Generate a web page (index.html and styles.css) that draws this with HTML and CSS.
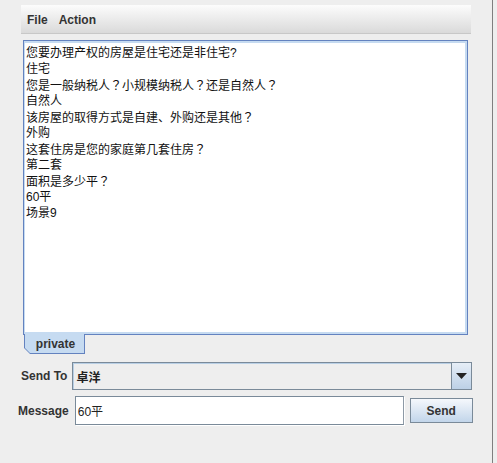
FILE: index.html
```html
<!DOCTYPE html>
<html>
<head>
<meta charset="utf-8">
<link rel="stylesheet" href="styles.css">
</head>
<body>
<div class="frame">
  <div class="menubar">
    <span class="menu">File</span>
    <span class="menu">Action</span>
  </div>
  <div class="tabpane">
    <div class="content">
      <div class="textarea">
        <div class="line">您要办理产权的房屋是住宅还是非住宅?</div>
        <div class="line">住宅</div>
        <div class="line">您是一般纳税人<span class="fw">？</span>小规模纳税人<span class="fw">？</span>还是自然人<span class="fw">？</span></div>
        <div class="line">自然人</div>
        <div class="line">该房屋的取得方式是自建、外购还是其他<span class="fw">？</span></div>
        <div class="line">外购</div>
        <div class="line">这套住房是您的家庭第几套住房<span class="fw">？</span></div>
        <div class="line">第二套</div>
        <div class="line">面积是多少平<span class="fw">？</span></div>
        <div class="line">60平</div>
        <div class="line">场景9</div>
      </div>
    </div>
    <div class="tab"><div class="tab-inner">private</div></div>
  </div>
  <div class="row row-send">
    <span class="label">Send To</span>
    <div class="combo">
      <span class="combo-value">卓洋</span>
      <span class="combo-arrow"><svg width="11" height="6" viewBox="0 0 11 6"><path d="M0 0H11L5.5 6Z" fill="#222"/></svg></span>
    </div>
  </div>
  <div class="row row-msg">
    <span class="label">Message</span>
    <div class="field">60平</div>
    <div class="button">Send</div>
  </div>
</div>
</body>
</html>
```

FILE: styles.css
```css
html, body {
  margin: 0;
  padding: 0;
  background: #eeeeee;
}
body {
  width: 497px;
  height: 463px;
  overflow: hidden;
  font-family: "Liberation Sans", "Noto Sans CJK SC", sans-serif;
  font-size: 12px;
  color: #333333;
}
.frame {
  width: 493px;
  height: 463px;
  border-right: 1px solid #7f7f7f;
  padding-top: 5px;
  box-sizing: border-box;
}
.menubar {
  margin-left: 21px;
  width: 450px;
  height: 29px;
  box-sizing: border-box;
  background: linear-gradient(#fcfcfc, #dadada);
  border-bottom: 1px solid #c8c8c8;
  display: flex;
  align-items: center;
  padding-left: 6px;
  gap: 11px;
  padding-top: 1px;
}
.menu {
  font-weight: bold;
  font-size: 12px;
  color: #333333;
}
.tabpane {
  margin-left: 23px;
  margin-top: 6px;
  width: 445px;
}
.content {
  height: 295px;
  box-sizing: border-box;
  border: 1px solid #6382bf;
}
.textarea {
  height: 100%;
  box-sizing: border-box;
  background: #ffffff;
  border-style: solid;
  border-color: #c6dbf1;
  border-width: 2px 2px 2px 1px;
  padding: 2px 0 0 1px;
  font-family: "Liberation Sans", "Noto Sans CJK SC", sans-serif;
  font-size: 12px;
  color: #111111;
}
.line {
  height: 16px;
  line-height: 16px;
  white-space: nowrap;
}
.fw {
  font-family: "Noto Sans CJK JP", sans-serif;
}
.tab {
  margin-left: 1px;
  margin-top: -1px;
  width: 61px;
  height: 20px;
  box-sizing: border-box;
  background: #6382bf;
  padding: 0 1px 1px 1px;
  clip-path: polygon(0 0, 100% 0, 100% 100%, 6px 100%, 0 calc(100% - 6px));
}
.tab-inner {
  height: 100%;
  background: #c6dbf1;
  clip-path: polygon(0 0, 100% 0, 100% 100%, 5px 100%, 0 calc(100% - 5px));
  font-weight: bold;
  font-size: 12px;
  color: #333333;
  display: flex;
  align-items: center;
  justify-content: center;
  padding-left: 2px;
  padding-top: 1px;
  box-sizing: border-box;
}
.row {
  display: flex;
  align-items: center;
}
.row-send {
  margin-top: 8px;
  margin-left: 21px;
  gap: 5px;
}
.row-msg {
  margin-top: 6px;
  margin-left: 18px;
}
.label {
  font-weight: bold;
  font-size: 12px;
  color: #333333;
}
.combo {
  width: 400px;
  height: 28px;
  box-sizing: border-box;
  border: 1px solid #7a8a99;
  background: #eeeeee;
  box-shadow: inset 1px 1px 0 #b8cfe5;
  display: flex;
  align-items: stretch;
}
.combo-value {
  flex: 1;
  display: flex;
  align-items: center;
  padding-left: 3px;
  font-weight: bold;
  color: #222222;
}
.combo-arrow {
  width: 19px;
  border-left: 1px solid #7a8a99;
  background: linear-gradient(#e6eef7, #bcd0e6);
  display: flex;
  align-items: center;
  justify-content: center;
}
.field {
  margin-left: 6px;
  width: 329px;
  height: 29px;
  box-sizing: border-box;
  background: #ffffff;
  border: 1px solid #7a8a99;
  border-right-color: #8e9aa6;
  box-shadow: 1px 1px 0 #ffffff;
  display: flex;
  align-items: center;
  padding-left: 2px;
  color: #222222;
}
.button {
  margin-left: 6px;
  width: 63px;
  height: 25px;
  box-sizing: border-box;
  border: 1px solid #7a8a99;
  background: linear-gradient(#f5f8fc, #c2d5ea);
  display: flex;
  align-items: center;
  justify-content: center;
  font-weight: bold;
  color: #333333;
}
```
